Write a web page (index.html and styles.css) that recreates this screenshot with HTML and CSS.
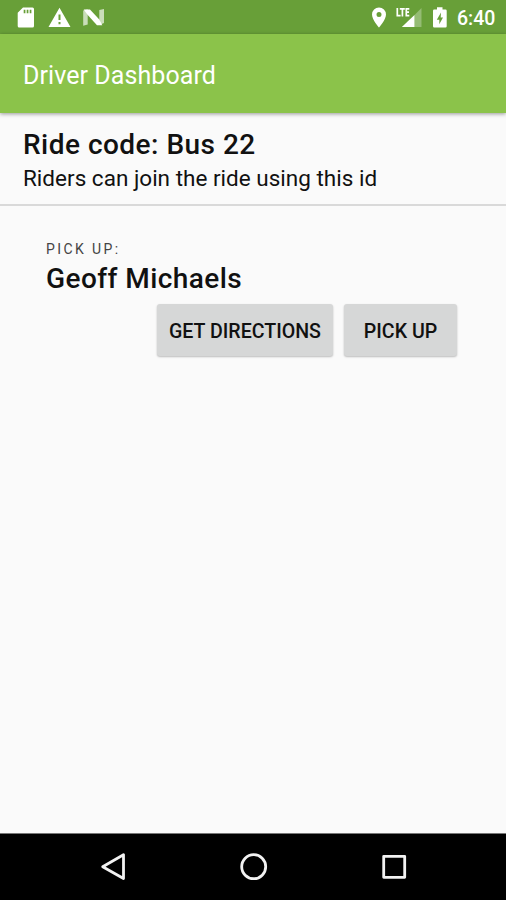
FILE: index.html
```html
<!DOCTYPE html>
<html lang="en">
<head>
<meta charset="utf-8">
<title>Driver Dashboard</title>
<link rel="stylesheet" href="styles.css">
</head>
<body>
<div class="screen">
  <div class="status-bar">
    <svg class="status-icons" width="130" height="34" viewBox="0 0 130 34">
      <path fill="#fff" fill-rule="evenodd" d="M23 7.500h9.500q1.500 0 1.500 1.500v17q0 1.500-1.500 1.500h-13.300q-1.500 0-1.500-1.500V12.800zM23.700 9.700v3.500h1.700V9.700zM26.700 9.700v3.500h1.700V9.700zM29.700 9.700v3.500h1.700V9.700z"/>
      <path fill="#fff" fill-rule="evenodd" d="M59.500 7.700 70.500 27h-22zM58.500 14.500v5.500h2v-5.500zM58.500 22v2.200h2V22z"/>
      <path fill="#fff" opacity=".65" d="M83.200 10.500l4.500-1.200v15.200l-4.500 1.200zM99.300 10l4.700-1v14l-4.700 2z"/>
      <path fill="#fff" d="M83.700 9.600h6.300l9.300 9.900 3 5.700h-5.300l-9.500-10.500z"/>
    </svg>
    <div class="status-right">
      <svg width="92" height="34" viewBox="360 0 92 34">
        <path fill="#fff" fill-rule="evenodd" d="M379 7.500a7 7 0 0 1 7 7c0 5.200-7 13-7 13s-7-7.800-7-13a7 7 0 0 1 7-7zM379 12a2.500 2.500 0 1 0 0 5 2.500 2.500 0 0 0 0-5z"/>
        <path fill="#fff" opacity=".3" d="M421.500 8v19h-7V15z"/>
        <path fill="#fff" d="M414.500 15v12h-12.700z"/>
        <path fill="none" stroke="#fff" stroke-width="1.700" d="M397.300 8v7.600h3.300M399.800 8.800h5M402.400 8.800v7.600M409.300 8.800h-3v6.800h3M406.300 12.200h2.700"/>
        <path fill="#fff" fill-rule="evenodd" d="M437 7.200h5.500v2.300h3q1.200 0 1.200 1.200v15.600q0 1.200-1.200 1.200h-11.300q-1.200 0-1.200-1.200V10.700q0-1.200 1.200-1.200h2.800zM441 12.500l-4.200 7.200h2.500v4.500l3.700-6.700h-2.300z"/>
      </svg>
      <span class="clock">6:40</span>
    </div>
  </div>
  <header class="toolbar"><h1 class="toolbar-title">Driver Dashboard</h1></header>
  <section class="ride">
    <h2 class="ride-code">Ride code: Bus 22</h2>
    <p class="ride-hint">Riders can join the ride using this id</p>
  </section>
  <main class="stop">
    <div class="stop-label">PICK UP:</div>
    <div class="stop-name">Geoff Michaels</div>
    <div class="actions">
      <button class="btn directions">GET DIRECTIONS</button>
      <button class="btn pickup">PICK UP</button>
    </div>
  </main>
  <nav class="nav-bar">
    <svg width="506" height="66" viewBox="0 0 506 66" fill="none" stroke="#f2f2f2" stroke-width="2.800" stroke-linejoin="round">
      <path d="M123.500 20.800v23.700L102.700 32.700z"/>
      <circle cx="253.700" cy="32.700" r="12"/>
      <rect x="383.700" y="22.300" width="21" height="21"/>
    </svg>
  </nav>
</div>
</body>
</html>
```
FILE: styles.css
```css
* { box-sizing: border-box; }
body { margin: 0; font-family: Roboto, "Liberation Sans", sans-serif; color: #111; }
h1, h2, p { margin: 0; font-weight: 400; white-space: nowrap; }
.screen { width: 506px; height: 900px; display: flex; flex-direction: column; background: #fafafa; overflow: hidden; }
.status-bar { height: 34px; flex: none; display: flex; justify-content: space-between; background: #689f38; color: #fff; }
.status-right { display: flex; width: 146px; }
.status-right svg { flex: none; }
.clock { margin-left: 5px; font-size: 19.5px; font-weight: 500; line-height: 38px; }
.toolbar { height: 79px; flex: none; padding-left: 23px; background: #8bc34a; color: #fff; box-shadow: 0 1px 4px rgba(0,0,0,.4); }
.toolbar-title { font-size: 25px; line-height: 83px; letter-spacing: .07px; }
.ride { height: 93px; flex: none; padding: 14px 0 0 23px; border-bottom: 2px solid #d9d9d9; }
.ride-code { font-size: 28px; line-height: 36px; font-weight: 500; letter-spacing: .48px; }
.ride-hint { font-size: 22.5px; line-height: 30px; letter-spacing: .01px; }
.stop { flex: 1; padding: 34px 49px 0 46px; }
.stop-label { font-size: 14px; line-height: 18px; letter-spacing: 2.4px; color: #444; }
.stop-name { font-size: 28px; line-height: 36px; font-weight: 500; letter-spacing: .43px; margin-top: 3px; }
.actions { display: flex; justify-content: flex-end; gap: 11px; margin-top: 7px; }
.btn { height: 52px; padding: 3px 0 0; border: 0; border-radius: 3px; background: #d6d7d7; color: #111; font: 500 19.6px/49px Roboto, sans-serif; box-shadow: 0 1px 2px rgba(0,0,0,.25); white-space: nowrap; }
.directions { width: 176px; }
.pickup { width: 113px; }
.nav-bar { height: 67px; flex: none; border-top: 1px solid #777; background: #000; }
.nav-bar svg { display: block; }
```
